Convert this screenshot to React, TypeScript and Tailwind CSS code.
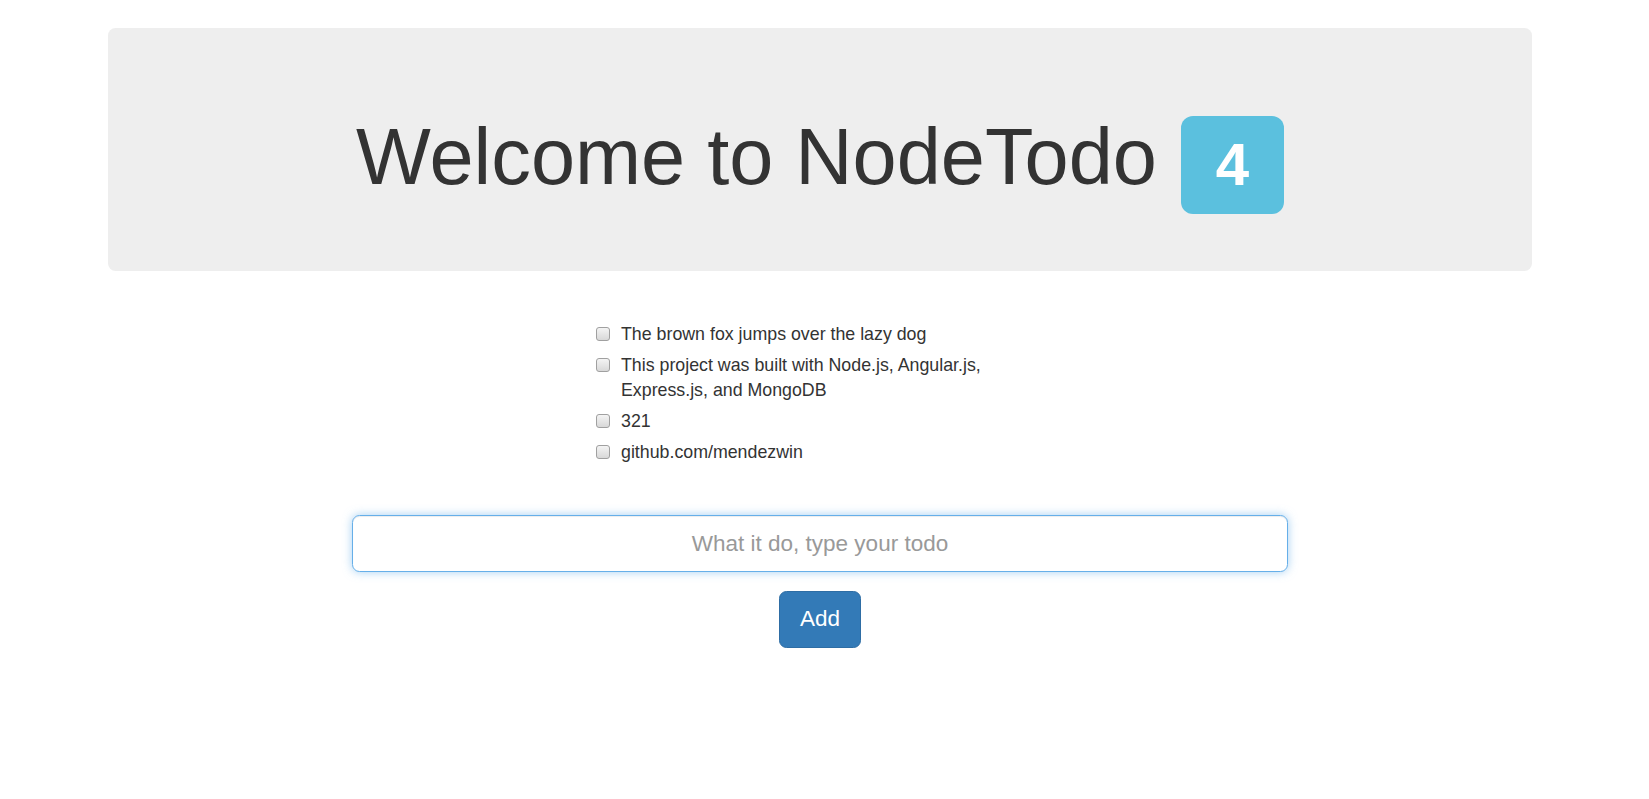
import { useState } from 'react'

const todos = [
  'The brown fox jumps over the lazy dog',
  'This project was built with Node.js, Angular.js, Express.js, and MongoDB',
  '321',
  'github.com/mendezwin',
]

export default function App() {
  const [text, setText] = useState('')

  return (
    <div className="min-h-screen bg-white text-[#333] font-['Liberation_Sans','Arial',sans-serif]">
      <div className="ml-[108px] w-[1424px] pt-[28px] pb-[100px]">
        {/* jumbotron */}
        <div className="h-[243px] rounded-[7.5px] bg-[#eee] pt-[85px]">
          <h1 className="flex h-[87px] items-start justify-center gap-[24px]">
            <span className="text-[79.3px] font-normal leading-[87px]">Welcome to NodeTodo</span>
            <span className="mt-[3px] flex h-[98px] w-[103px] items-center justify-center rounded-[12px] bg-[#5bc0de] text-[60px] font-bold leading-none text-white">
              {todos.length}
            </span>
          </h1>
        </div>

        {/* todo list */}
        <div className="mx-auto mt-[51px] flex w-[450px] flex-col gap-[6px] pl-[1px]">
          {todos.map(t => (
            <label key={t} className="flex items-start text-[17.8px] leading-[25px]">
              <span className="mt-[5px] h-[14px] w-[14px] shrink-0 rounded-[3px] border border-[#a0a0a0] bg-gradient-to-b from-[#f4f4f4] to-[#d8d8d8]" />
              <span className="ml-[11px]">{t}</span>
            </label>
          ))}
        </div>

        {/* form */}
        <div className="mx-auto mt-[50px] flex w-[936px] flex-col items-center gap-[19px]">
          <input
            type="text"
            autoFocus
            value={text}
            onChange={e => setText(e.target.value)}
            placeholder="What it do, type your todo"
            className="h-[57px] w-full rounded-[7.5px] border border-[#66afe9] bg-white px-[20px] text-center text-[22.5px] text-[#555] shadow-[inset_0_1px_1px_rgba(0,0,0,0.075),0_0_10px_rgba(102,175,233,0.6)] outline-none placeholder:text-[#999]"
          />
          <button
            type="button"
            className="h-[57px] rounded-[7.5px] border border-[#2e6da4] bg-[#337ab7] px-[20px] text-[22.5px] leading-none text-white"
          >
            Add
          </button>
        </div>
      </div>
    </div>
  )
}
